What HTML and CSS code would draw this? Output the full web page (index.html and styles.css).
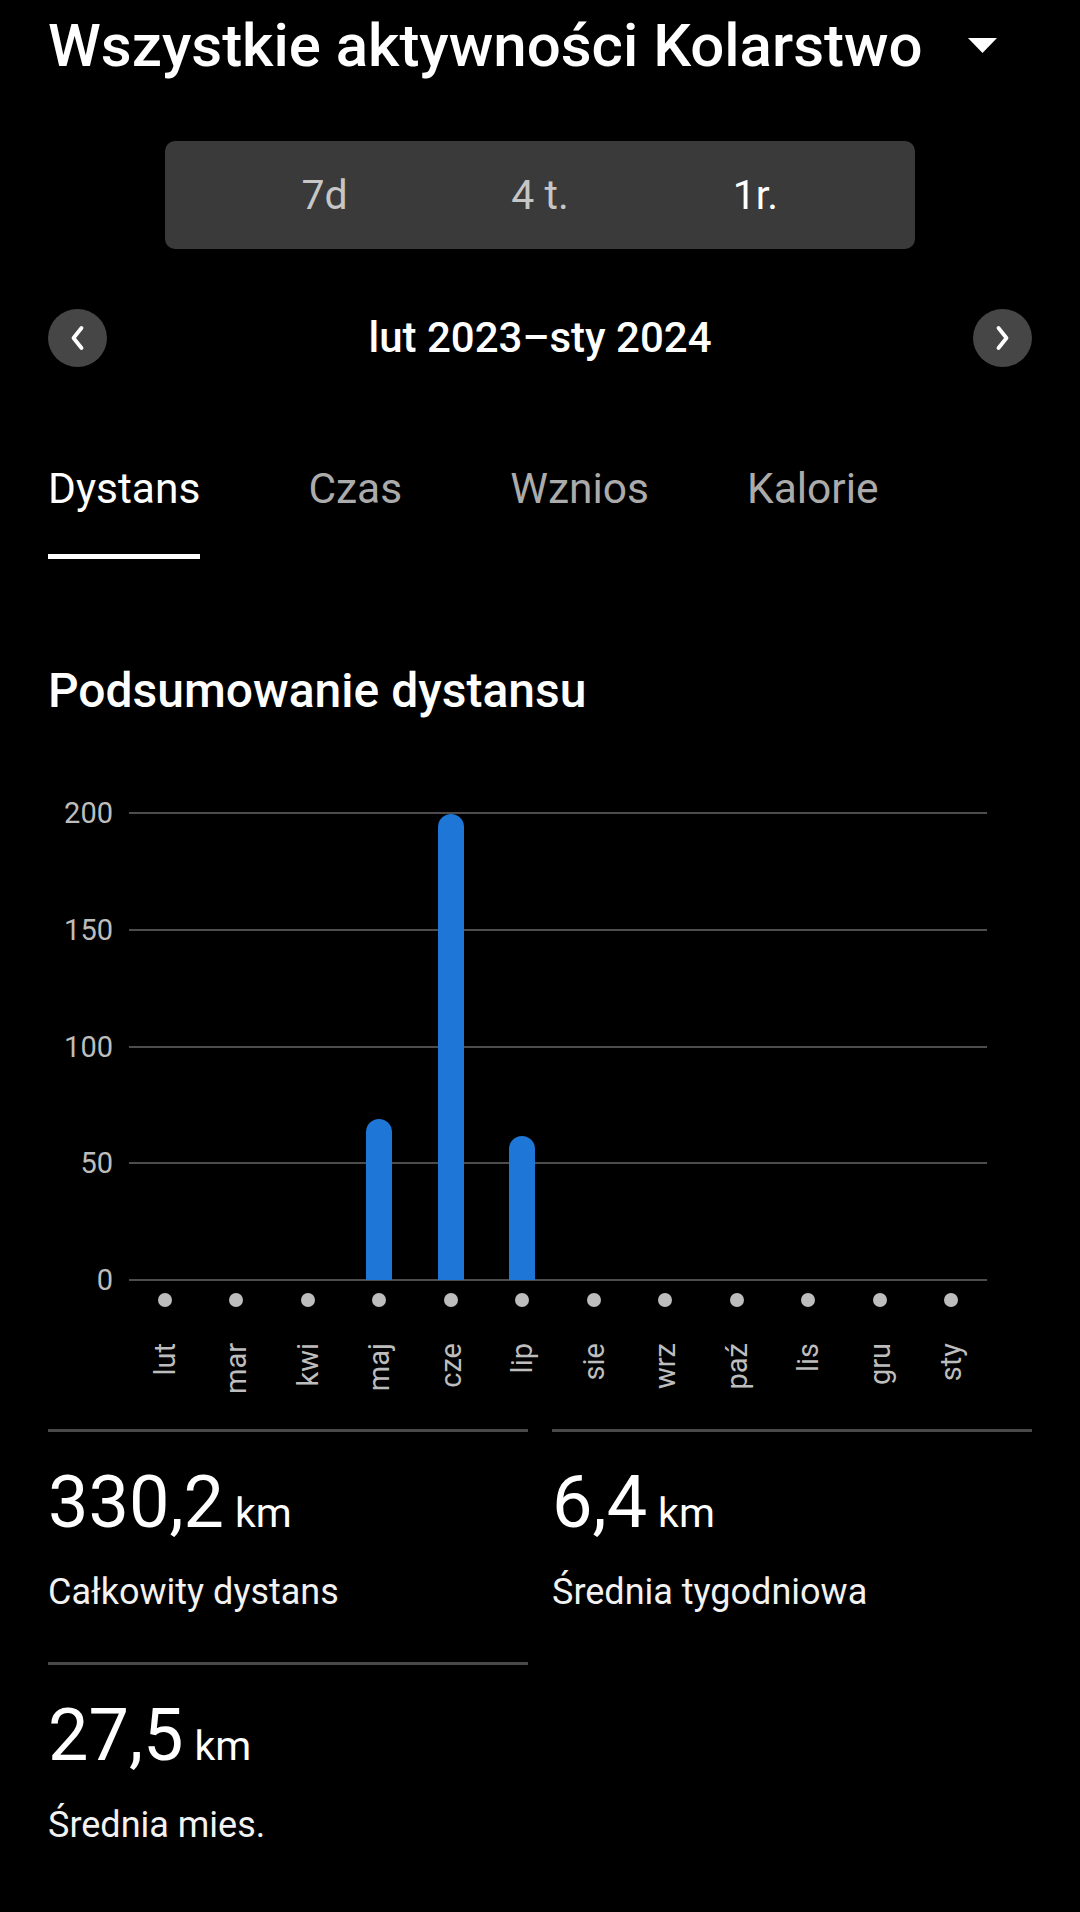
FILE: index.html
```html
<!DOCTYPE html>
<html lang="pl">
<head>
<meta charset="utf-8">
<title>Podsumowanie dystansu</title>
<link rel="stylesheet" href="styles.css">
</head>
<body>
<div class="screen">
  <header class="title-row">
    <h1 class="title">Wszystkie aktywności Kolarstwo</h1>
    <svg class="caret" width="29" height="15" viewBox="0 0 29 15" aria-hidden="true"><polygon points="0,0 29,0 14.5,15" fill="#fff"/></svg>
  </header>

  <div class="segments">
    <div class="seg">7d</div>
    <div class="seg">4 t.</div>
    <div class="seg active">1r.</div>
  </div>

  <div class="date-nav">
    <button class="nav-btn" aria-label="Poprzedni">
      <svg width="30" height="30" viewBox="0 0 30 30"><path d="M18.5 5 L10.5 15 L18.5 25" fill="none" stroke="#fff" stroke-width="3.8" stroke-linecap="round" stroke-linejoin="round"/></svg>
    </button>
    <div class="date">lut 2023–sty 2024</div>
    <button class="nav-btn" aria-label="Następny">
      <svg width="30" height="30" viewBox="0 0 30 30"><path d="M11.5 5 L19.5 15 L11.5 25" fill="none" stroke="#fff" stroke-width="3.8" stroke-linecap="round" stroke-linejoin="round"/></svg>
    </button>
  </div>

  <nav class="tabs">
    <div class="tab active">Dystans</div>
    <div class="tab">Czas</div>
    <div class="tab">Wznios</div>
    <div class="tab last">Kalorie</div>
  </nav>

  <h2 class="section-title">Podsumowanie dystansu</h2>

  <div class="chart">
    <div class="grid-rows">
      <div class="grow"><span class="ylabel">200</span><span class="gline"></span></div>
      <div class="grow"><span class="ylabel">150</span><span class="gline"></span></div>
      <div class="grow"><span class="ylabel">100</span><span class="gline"></span></div>
      <div class="grow"><span class="ylabel">50</span><span class="gline"></span></div>
      <div class="grow"><span class="ylabel">0</span><span class="gline"></span></div>
    </div>
    <div class="bars">
      <div class="col"></div>
      <div class="col"></div>
      <div class="col"></div>
      <div class="col"><div class="bar" style="height:161px"></div></div>
      <div class="col"><div class="bar" style="height:466px"></div></div>
      <div class="col"><div class="bar" style="height:144px"></div></div>
      <div class="col"></div>
      <div class="col"></div>
      <div class="col"></div>
      <div class="col"></div>
      <div class="col"></div>
      <div class="col"></div>
    </div>
  </div>

  <div class="xaxis">
    <div class="xcol"><span class="dot"></span><span class="xlabel">lut</span></div>
    <div class="xcol"><span class="dot"></span><span class="xlabel">mar</span></div>
    <div class="xcol"><span class="dot"></span><span class="xlabel">kwi</span></div>
    <div class="xcol"><span class="dot"></span><span class="xlabel">maj</span></div>
    <div class="xcol"><span class="dot"></span><span class="xlabel">cze</span></div>
    <div class="xcol"><span class="dot"></span><span class="xlabel">lip</span></div>
    <div class="xcol"><span class="dot"></span><span class="xlabel">sie</span></div>
    <div class="xcol"><span class="dot"></span><span class="xlabel">wrz</span></div>
    <div class="xcol"><span class="dot"></span><span class="xlabel">paź</span></div>
    <div class="xcol"><span class="dot"></span><span class="xlabel">lis</span></div>
    <div class="xcol"><span class="dot"></span><span class="xlabel">gru</span></div>
    <div class="xcol"><span class="dot"></span><span class="xlabel">sty</span></div>
  </div>

  <section class="stats">
    <div class="stat">
      <div class="value">330,2<span class="unit">km</span></div>
      <div class="label">Całkowity dystans</div>
    </div>
    <div class="stat">
      <div class="value">6,4<span class="unit">km</span></div>
      <div class="label">Średnia tygodniowa</div>
    </div>
    <div class="stat">
      <div class="value">27,5<span class="unit">km</span></div>
      <div class="label">Średnia mies.</div>
    </div>
  </section>
</div>
</body>
</html>
```

FILE: styles.css
```css
* { box-sizing: border-box; }

html, body {
  margin: 0;
  padding: 0;
  background: #000;
}

body {
  width: 1080px;
  height: 1912px;
  overflow: hidden;
  font-family: Roboto, "Noto Sans", "Liberation Sans", sans-serif;
  color: #fff;
}

.screen {
  padding: 10px 48px 0 48px;
}

/* Title */
.title-row {
  display: flex;
  align-items: center;
  gap: 45px;
}

.title {
  margin: 0;
  font-size: 60px;
  line-height: 72px;
  font-weight: 500;
  color: #fff;
  white-space: nowrap;
}

.caret {
  flex: none;
  margin-top: -2px;
}

/* Segmented control */
.segments {
  width: 750px;
  height: 108px;
  margin: 59px auto 0 auto;
  padding: 0 52px;
  background: #3a3a3a;
  border-radius: 10px;
  display: grid;
  grid-template-columns: repeat(3, 1fr);
  align-items: center;
}

.seg {
  text-align: center;
  font-size: 41px;
  line-height: 48px;
  color: #c6c6c6;
}

.seg.active {
  color: #fff;
}

/* Date navigation */
.date-nav {
  margin-top: 60px;
  display: flex;
  align-items: center;
  justify-content: space-between;
}

.nav-btn {
  width: 59px;
  height: 58px;
  border-radius: 50%;
  border: none;
  padding: 0;
  background: #464646;
  display: flex;
  align-items: center;
  justify-content: center;
}

.date {
  font-size: 42px;
  line-height: 48px;
  font-weight: 500;
  color: #fff;
}

/* Tabs */
.tabs {
  margin-top: 98px;
  display: flex;
  gap: 108px;
}

.tab {
  font-size: 42.5px;
  line-height: 48px;
  color: #ababab;
  padding-bottom: 41px;
  border-bottom: 5px solid transparent;
}

.tab.last {
  margin-left: -10px;
}

.tab.active {
  color: #fff;
  border-bottom-color: #fff;
}

/* Section title */
.section-title {
  margin: 104px 0 0 0;
  font-size: 48px;
  line-height: 56px;
  font-weight: 500;
  color: #fff;
}

/* Chart */
.chart {
  position: relative;
  margin-top: 94px;
  height: 467px;
}

.grid-rows {
  height: 100%;
  display: flex;
  flex-direction: column;
  justify-content: space-between;
}

.grow {
  height: 0;
  display: flex;
  align-items: center;
}

.ylabel {
  width: 65px;
  text-align: right;
  font-size: 29px;
  line-height: 34px;
  color: #bdbdbd;
}

.gline {
  margin-left: 16px;
  width: 858px;
  height: 2px;
  background: #4d4d4d;
}

.bars {
  position: absolute;
  left: 81px;
  top: 0;
  bottom: 0;
  width: 858px;
  display: grid;
  grid-template-columns: repeat(12, 1fr);
  align-items: end;
  justify-items: center;
}

.bar {
  width: 26px;
  background: #1e77d6;
  border-radius: 13px 13px 0 0;
}

/* X axis */
.xaxis {
  margin-left: 81px;
  width: 858px;
  padding-top: 13px;
  height: 149px;
  display: grid;
  grid-template-columns: repeat(12, 1fr);
}

.xcol {
  display: flex;
  flex-direction: column;
  align-items: center;
}

.dot {
  width: 14px;
  height: 14px;
  border-radius: 50%;
  background: #bdbdbd;
}

.xlabel {
  margin-top: 36px;
  writing-mode: vertical-rl;
  transform: rotate(180deg);
  font-size: 29px;
  line-height: 34px;
  color: #bdbdbd;
  white-space: nowrap;
}

/* Stats */
.stats {
  display: grid;
  grid-template-columns: 1fr 1fr;
  column-gap: 24px;
}

.stat {
  border-top: 3px solid #4a4a4a;
  padding: 29px 0 48px 0;
}

.value {
  font-size: 72px;
  line-height: 84px;
  color: #fff;
  white-space: nowrap;
}

.unit {
  font-size: 41px;
  margin-left: 11px;
}

.label {
  margin-top: 15px;
  font-size: 36px;
  line-height: 44px;
  color: #f2f2f2;
}
```
